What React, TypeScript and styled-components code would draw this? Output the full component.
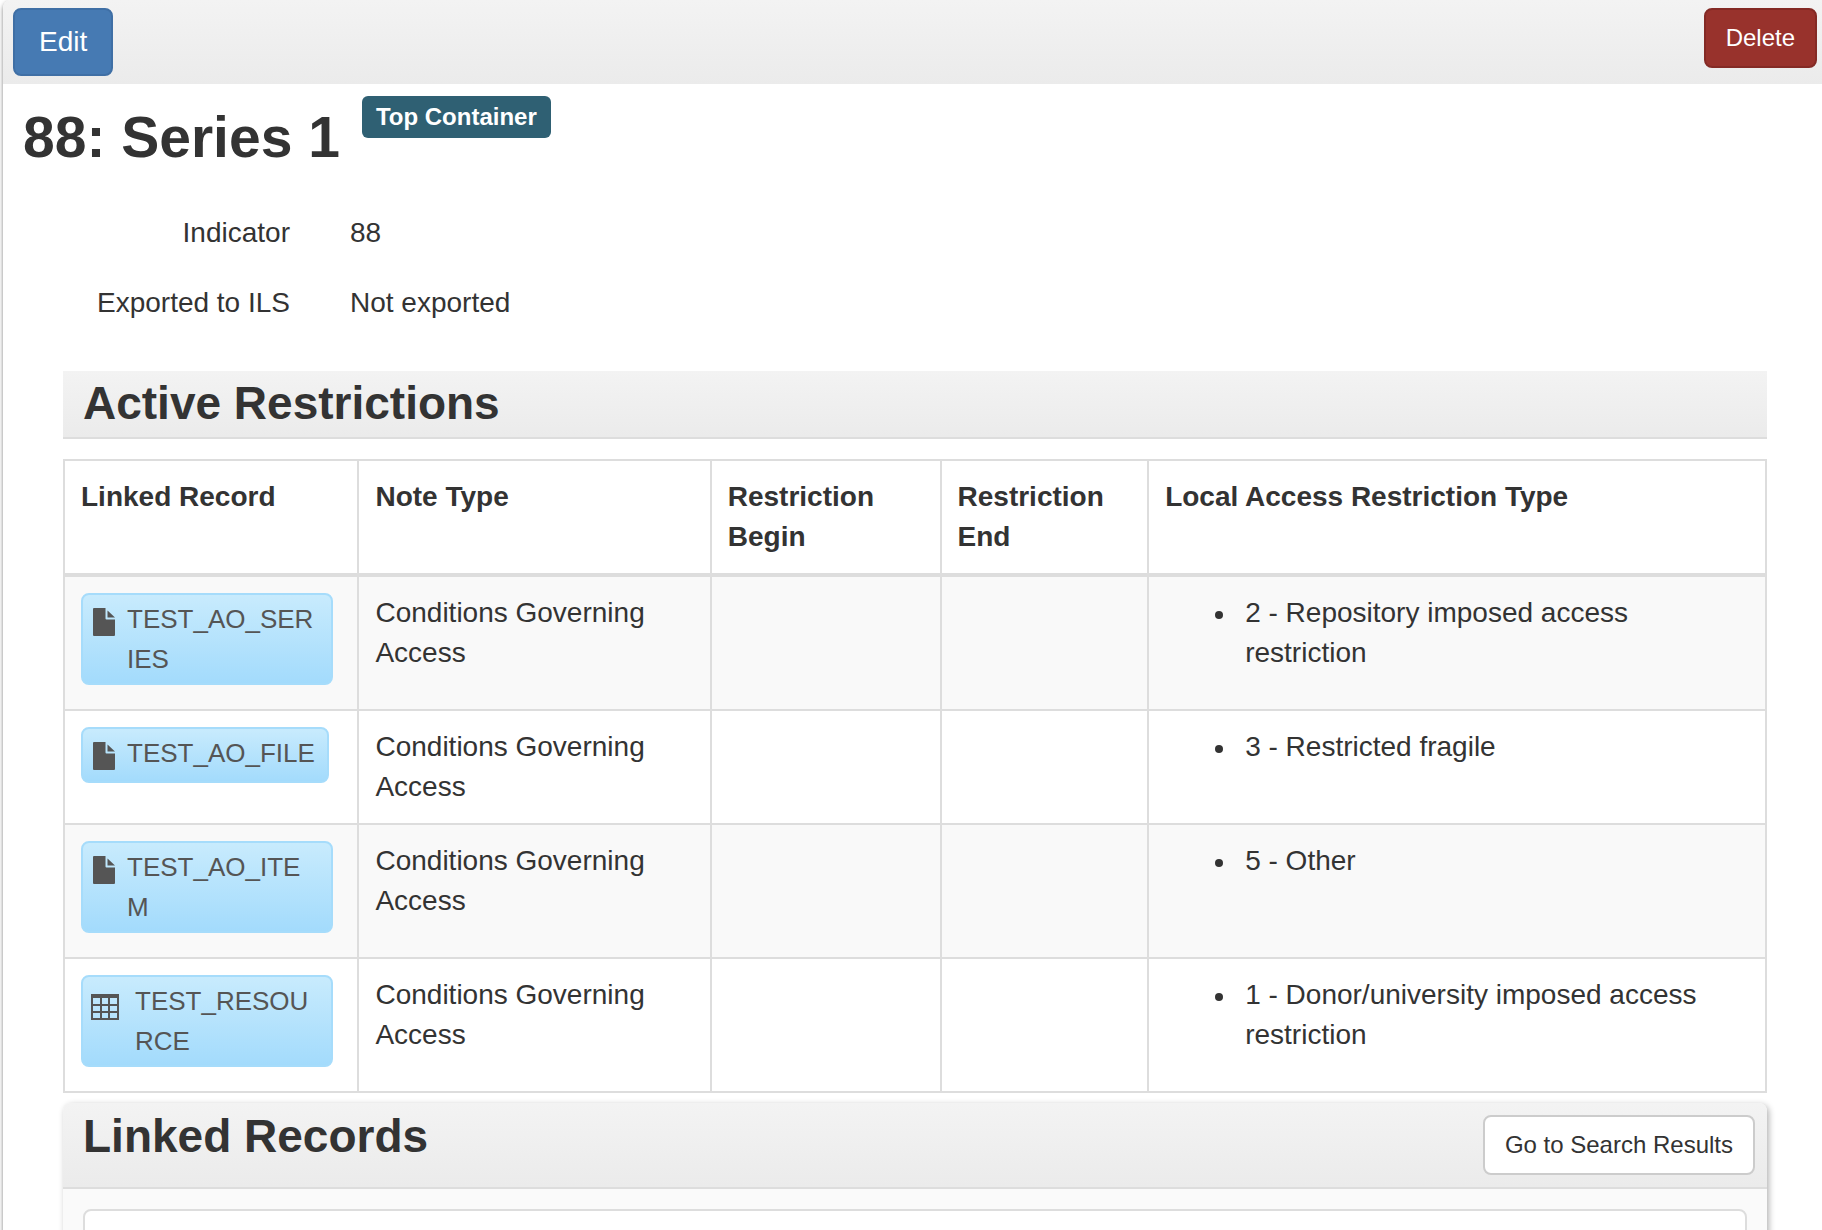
import React from "react";
import styled, { createGlobalStyle } from "styled-components";

const GlobalStyle = createGlobalStyle`
  *, *::before, *::after { box-sizing: border-box; }
  body {
    margin: 0;
    background: #fff;
    color: #333;
    font-family: "Liberation Sans", Arial, sans-serif;
    font-size: 28px;
    line-height: 40px;
  }
`;

const Page = styled.main`
  margin-left: 3px;
  border-top-left-radius: 8px;
  box-shadow: 0 2px 4px rgba(0, 0, 0, 0.5);
`;

const Toolbar = styled.header`
  display: flex;
  justify-content: space-between;
  align-items: flex-start;
  padding: 8px 5px 8px 10px;
  border-top-left-radius: 8px;
  background: linear-gradient(#f3f3f3, #ebebeb);
`;

const Button = styled.button<{ $tone: "primary" | "danger" | "plain" }>`
  font-family: inherit;
  font-size: ${(p) => (p.$tone === "primary" ? 28 : 24)}px;
  line-height: ${(p) => (p.$tone === "primary" ? 40 : 36)}px;
  padding: ${(p) => (p.$tone === "primary" ? "12px 24px" : "10px 20px")};
  border: 2px solid
    ${(p) => ({ primary: "#3f6fa5", danger: "#842a25", plain: "#ccc" })[p.$tone]};
  border-radius: 8px;
  background: ${(p) => ({ primary: "#467ab3", danger: "#98322c", plain: "#fff" })[p.$tone]};
  color: ${(p) => (p.$tone === "plain" ? "#333" : "#fff")};
  white-space: nowrap;
  cursor: pointer;
`;

const TitleRow = styled.div`
  display: flex;
  align-items: flex-start;
  gap: 22px;
  padding: 12px 20px 0;
`;

const Title = styled.h2`
  margin: 8px 0 0;
  font-size: 57px;
  line-height: 66px;
`;

const Badge = styled.span`
  padding: 3px 14px;
  border-radius: 6px;
  background: #2f6073;
  color: #fff;
  font-size: 24px;
  line-height: 36px;
  font-weight: bold;
`;

const Content = styled.div`
  padding: 0 55px 40px 60px;
`;

const Fields = styled.dl`
  display: grid;
  grid-template-columns: 227px 1fr;
  gap: 30px 60px;
  margin: 43px 0 48px;
`;

const Term = styled.dt`
  text-align: right;
`;

const Value = styled.dd`
  margin: 0;
`;

const SectionHeading = styled.h3`
  margin: 0 0 20px;
  padding: 6px 20px 8px;
  border-bottom: 2px solid #ddd;
  background: linear-gradient(#f3f3f3, #ebebeb);
  font-size: 46px;
  line-height: 52px;
`;

const Table = styled.table`
  width: 100%;
  table-layout: fixed;
  border-collapse: collapse;
  border: 2px solid #ddd;
`;

const Col = styled.col<{ $share?: number }>`
  width: ${(p) => (p.$share ? `${p.$share}%` : "auto")};
`;

const HeadCell = styled.th`
  padding: 16px;
  border: 2px solid #ddd;
  border-bottom-width: 4px;
  text-align: left;
  vertical-align: top;
`;

const Row = styled.tr`
  &:nth-child(odd) {
    background: #f9f9f9;
  }
`;

const Cell = styled.td`
  padding: 16px;
  border: 2px solid #ddd;
  vertical-align: top;
`;

const ChipArea = styled.div`
  display: flex;
  padding: 0 8px 8px 0;
`;

const Chip = styled.a`
  display: flex;
  min-height: 56px;
  padding: 4px 12px 4px 8px;
  border: 2px solid #a6dcfb;
  border-radius: 8px;
  background: linear-gradient(#c8ebfd, #a3dbfc);
  color: #555;
  font-size: 26px;
  text-decoration: none;
  word-break: break-all;

  svg {
    flex: none;
    margin-top: 8px;
  }
`;

const ChipText = styled.span`
  padding-left: 10px;
`;

const List = styled.ul`
  margin: 0;
  padding-left: 80px;
  list-style: none;
`;

const ListItem = styled.li`
  position: relative;

  &::before {
    content: "";
    position: absolute;
    top: 18px;
    left: -30px;
    width: 8px;
    height: 8px;
    border-radius: 50%;
    background: currentColor;
  }
`;

const Panel = styled.section`
  margin-top: 10px;
  border-radius: 8px 8px 0 0;
  background: #fafafa;
  box-shadow: 2px 2px 6px rgba(0, 0, 0, 0.3);
`;

const PanelHeader = styled.div`
  display: flex;
  justify-content: space-between;
  align-items: flex-start;
  padding: 12px;
  padding-left: 20px;
  border-bottom: 2px solid #ddd;
  border-radius: 8px 8px 0 0;
  background: linear-gradient(#f3f3f3, #ebebeb);
`;

const PanelTitle = styled.h3`
  margin: 0;
  font-size: 46px;
  line-height: 42px;
`;

const PanelBody = styled.div`
  padding: 20px;
`;

const Results = styled.div`
  min-height: 120px;
  border: 2px solid #ddd;
  border-radius: 8px;
  background: #fff;
`;

const FileIcon = () => (
  <svg width="26" height="30" viewBox="0 0 26 30" fill="#555" aria-hidden="true">
    <path d="M3 1h11.500v10.500a1 1 0 0 0 1 1H24V28a1 1 0 0 1-1 1H3a1 1 0 0 1-1-1V2a1 1 0 0 1 1-1z" />
    <path d="M16.500 3.500L24 10.500h-7.500z" />
  </svg>
);

const TableIcon = () => (
  <svg width="34" height="38" viewBox="0 0 34 38" fill="none" stroke="#555" strokeWidth="2" aria-hidden="true">
    <path d="M1 7v23h26V7M0 16h28M0 23h28M10 7v23M18 7v23" />
    <path d="M0 7h28" strokeWidth="4" />
  </svg>
);

type Restriction = {
  record: string;
  kind: "file" | "table";
  note: string;
  type: string;
};

const restrictions: Restriction[] = [
  { record: "TEST_AO_SERIES", kind: "file", note: "Conditions Governing Access", type: "2 - Repository imposed access restriction" },
  { record: "TEST_AO_FILE", kind: "file", note: "Conditions Governing Access", type: "3 - Restricted fragile" },
  { record: "TEST_AO_ITEM", kind: "file", note: "Conditions Governing Access", type: "5 - Other" },
  { record: "TEST_RESOURCE", kind: "table", note: "Conditions Governing Access", type: "1 - Donor/university imposed access restriction" },
];

export default function App() {
  return (
    <>
      <GlobalStyle />
      <Page>
        <Toolbar>
          <Button type="button" $tone="primary">Edit</Button>
          <Button type="button" $tone="danger">Delete</Button>
        </Toolbar>
        <TitleRow>
          <Title>88: Series 1</Title>
          <Badge>Top Container</Badge>
        </TitleRow>
        <Content>
          <Fields>
            <Term>Indicator</Term>
            <Value>88</Value>
            <Term>Exported to ILS</Term>
            <Value>Not exported</Value>
          </Fields>
          <section>
            <SectionHeading>Active Restrictions</SectionHeading>
            <Table>
              <colgroup>
                <Col $share={17.3} />
                <Col $share={20.7} />
                <Col $share={13.5} />
                <Col $share={12.2} />
                <Col />
              </colgroup>
              <thead>
                <tr>
                  <HeadCell>Linked Record</HeadCell>
                  <HeadCell>Note Type</HeadCell>
                  <HeadCell>Restriction Begin</HeadCell>
                  <HeadCell>Restriction End</HeadCell>
                  <HeadCell>Local Access Restriction Type</HeadCell>
                </tr>
              </thead>
              <tbody>
                {restrictions.map((r) => (
                  <Row key={r.record}>
                    <Cell>
                      <ChipArea>
                        <Chip href="#">
                          {r.kind === "file" ? <FileIcon /> : <TableIcon />}
                          <ChipText>{r.record}</ChipText>
                        </Chip>
                      </ChipArea>
                    </Cell>
                    <Cell>{r.note}</Cell>
                    <Cell />
                    <Cell />
                    <Cell>
                      <List>
                        <ListItem>{r.type}</ListItem>
                      </List>
                    </Cell>
                  </Row>
                ))}
              </tbody>
            </Table>
          </section>
          <Panel>
            <PanelHeader>
              <PanelTitle>Linked Records</PanelTitle>
              <Button type="button" $tone="plain">Go to Search Results</Button>
            </PanelHeader>
            <PanelBody>
              <Results />
            </PanelBody>
          </Panel>
        </Content>
      </Page>
    </>
  );
}
